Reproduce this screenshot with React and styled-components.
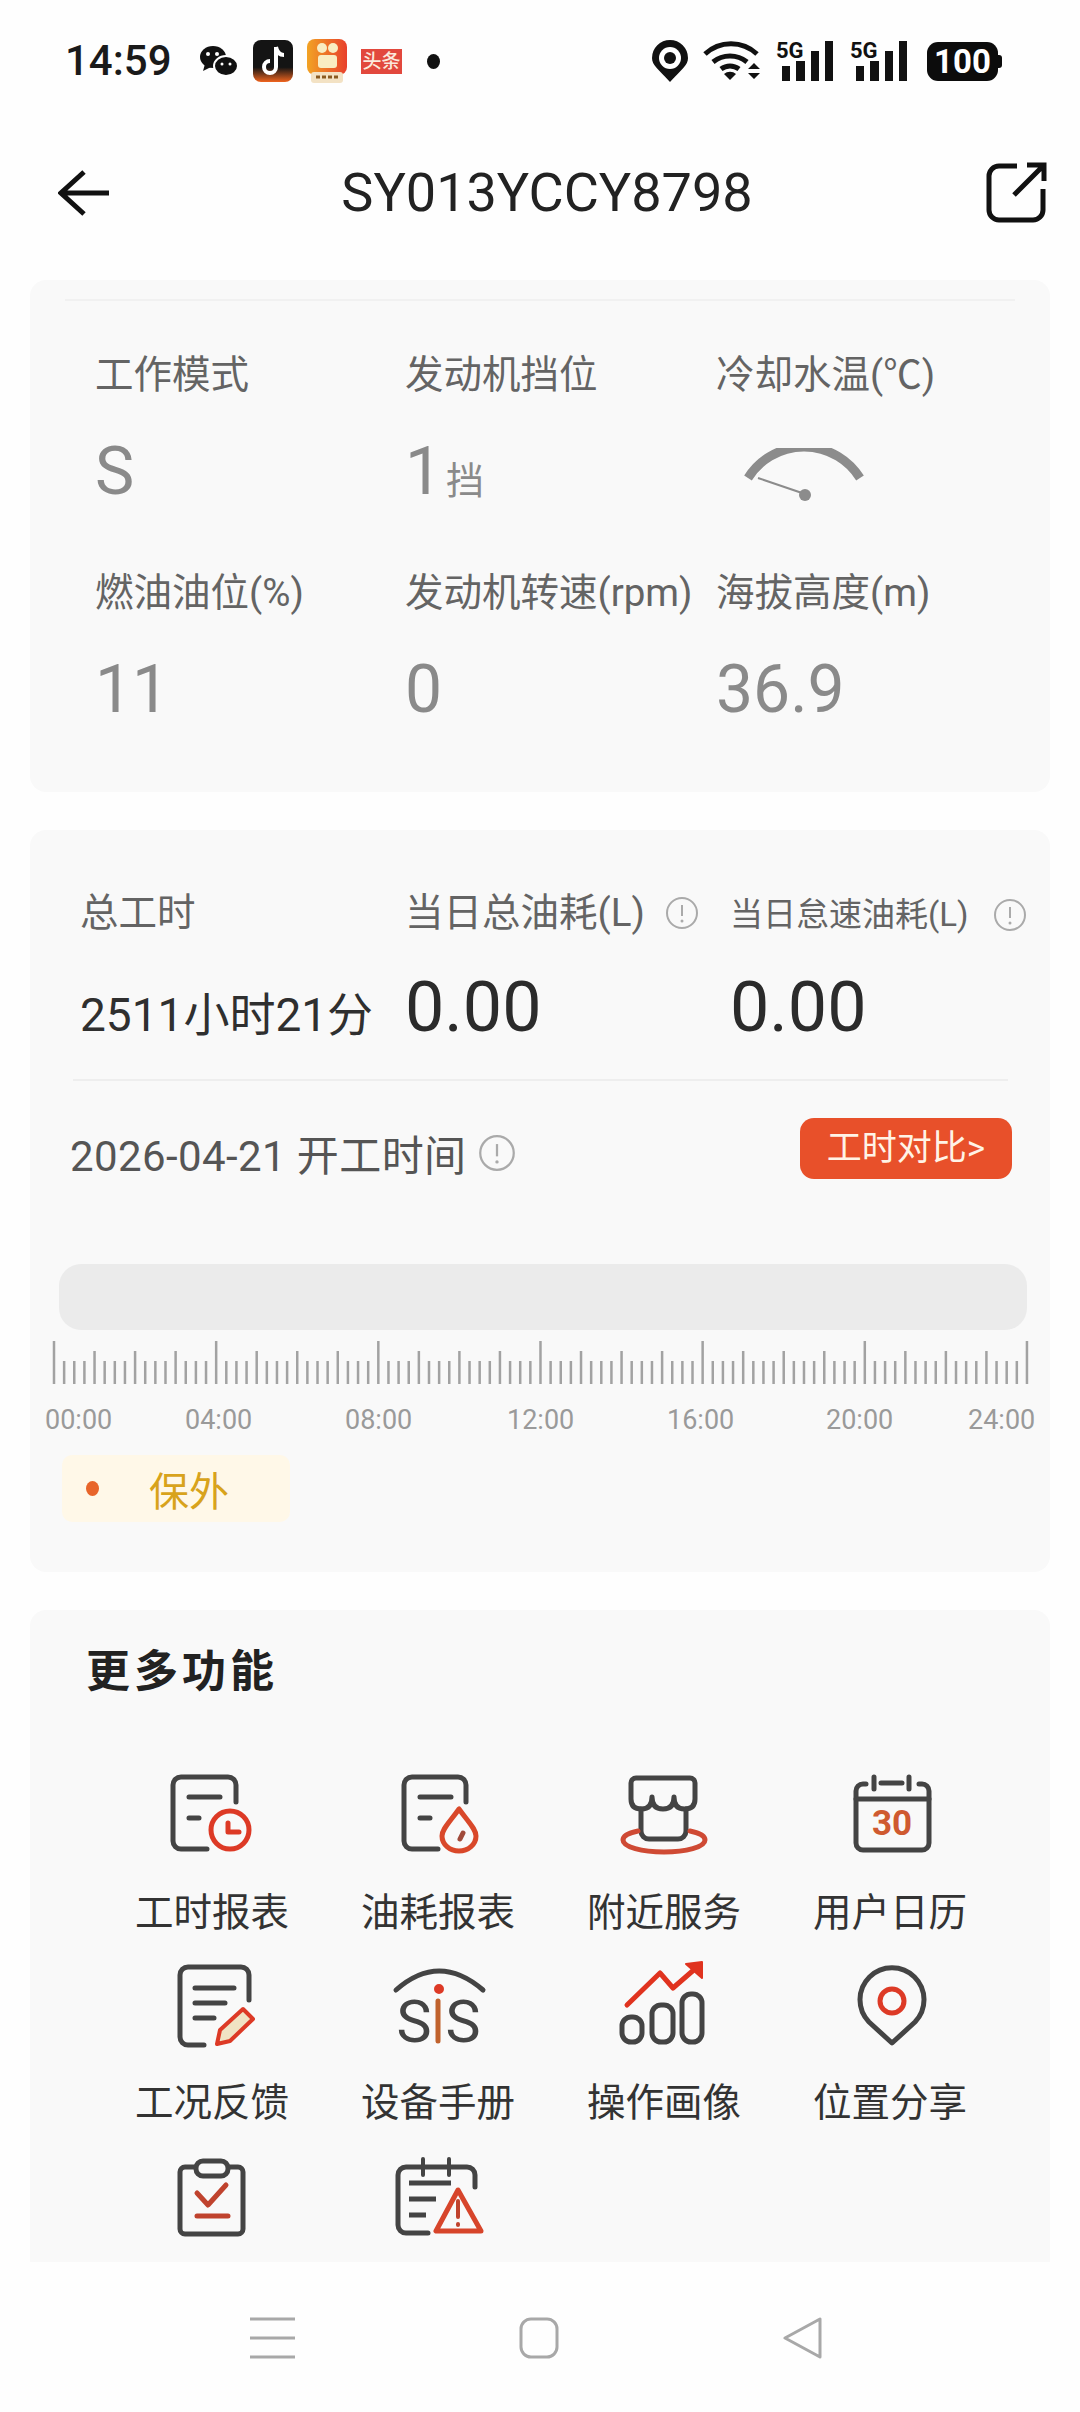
import React from "react";
import styled, { createGlobalStyle } from "styled-components";

const FONT = `Roboto, "Noto Sans CJK SC", sans-serif`;

const GlobalStyle = createGlobalStyle`
    html, body {
        margin: 0;
        padding: 0;
        background: #fefefe;
        font-family: ${FONT};
    }
`;

const Page = styled.div`
    width: 1080px;
    height: 2412px;
    display: flex;
    flex-direction: column;
    overflow: hidden;
    background: #fefefe;
`;

const StatusBar = styled.div`
    height: 120px;
    flex: none;
    display: flex;
    align-items: flex-start;
    justify-content: space-between;
    padding: 38px 77px 0 65px;
    box-sizing: border-box;
`;
const StatusGroup = styled.div`
    display: flex;
    align-items: center;
    height: 46px;
    gap: ${props => props.$gap || 15}px;
`;
const Clock = styled.div`
    width: 107px;
    margin-right: 13px;
    font-size: 42px;
    font-weight: 500;
    line-height: 46px;
    color: #1a1a1a;
`;
const NewsBadge = styled.div`
    width: 41px;
    height: 25px;
    background: #e2483d;
    color: #fbe9dc;
    font-size: 19px;
    line-height: 25px;
    text-align: center;
    font-weight: 500;
`;
const Dot = styled.div`
    width: 13px;
    height: 15px;
    margin-left: 11px;
    border-radius: 50%;
    background: #111;
`;
const Battery = styled.div`
    position: relative;
    width: 71px;
    height: 39px;
    margin-left: 3px;
    margin-right: 5px;
    border-radius: 11px;
    background: #0c0c0c;
    color: #fff;
    font-size: 33px;
    font-weight: 700;
    line-height: 39px;
    text-align: center;
    &::after {
        content: "";
        position: absolute;
        right: -4px;
        top: 13px;
        width: 4px;
        height: 13px;
        border-radius: 0 3px 3px 0;
        background: #0c0c0c;
    }
`;

const Header = styled.div`
    height: 145px;
    flex: none;
    display: flex;
    align-items: center;
    justify-content: space-between;
    padding: 0 33px 0 58px;
    box-sizing: border-box;
    margin-bottom: 15px;
`;
const Title = styled.div`
    font-size: 54px;
    color: #222;
    line-height: 60px;
`;

const Card = styled.div`
    margin: 0 30px;
    background: #f9f9f9;
    border-radius: 16px;
    flex: none;
`;
const StatsCard = styled(Card)`
    height: 512px;
    margin-bottom: 38px;
    overflow: hidden;
`;
const TopRule = styled.div`
    height: 2px;
    margin: 19px 35px 50px;
    background: #f1f1f1;
`;
const StatsGrid = styled.div`
    display: grid;
    grid-template-columns: 310px 311px 1fr;
    row-gap: 47px;
    padding-left: 65px;
`;
const Label = styled.div`
    font-size: ${props => props.$size || 38.5}px;
    line-height: 48px;
    height: 48px;
    color: ${props => props.$color || "#646464"};
    white-space: nowrap;
    display: flex;
    align-items: center;
`;
const StatValue = styled.div`
    height: 100px;
    line-height: 100px;
    margin-top: 23px;
    font-size: 66px;
    color: #8a8a8a;
    display: flex;
    align-items: baseline;
`;
const GaugeBox = styled.div`
    height: 100px;
    margin-top: 23px;
    padding: 6px 0 0 26px;
    box-sizing: border-box;
    display: flex;
    align-items: center;
`;
const Unit = styled.span`
    font-size: 38px;
    margin-left: 4px;
`;

const HoursCard = styled(Card)`
    height: 742px;
    margin-bottom: 38px;
    padding-top: 59px;
    box-sizing: border-box;
`;
const HoursGrid = styled.div`
    display: grid;
    grid-template-columns: 325px 325px 1fr;
    grid-template-rows: 48px 90px;
    row-gap: 25px;
    align-items: baseline;
    padding-left: 50px;
`;
const InfoButton = styled.svg`
    width: ${props => props.$size || 34}px;
    height: ${props => props.$size || 34}px;
    margin-left: ${props => props.$left || 20}px;
    flex: none;
`;
const HoursText = styled.div`
    font-size: 46px;
    color: #2f2f2f;
    white-space: nowrap;
`;
const BigNumber = styled.div`
    font-size: 70px;
    line-height: 90px;
    color: #2b2b2b;
`;
const Rule = styled.div`
    height: 2px;
    width: 935px;
    margin: 27px 0 33px 43px;
    background: #eeeeee;
`;
const DateRow = styled.div`
    display: flex;
    align-items: center;
    justify-content: space-between;
    padding: 0 38px 0 40px;
`;
const DateText = styled.div`
    display: flex;
    align-items: center;
    padding-top: 8px;
    font-size: 42px;
    letter-spacing: 0.4px;
    color: #555;
    white-space: pre;
`;
const CompareButton = styled.button`
    width: 212px;
    height: 61px;
    padding: 0;
    border: none;
    border-radius: 14px;
    background: #e8502a;
    color: #fff3e6;
    font-family: ${FONT};
    font-size: 35px;
    line-height: 61px;
`;
const TimelineBar = styled.div`
    width: 968px;
    height: 66px;
    margin: 81px 0 0 29px;
    border-radius: 22px;
    background: #ebebeb;
`;
const Ruler = styled.svg`
    display: block;
    width: 980px;
    height: 46px;
    margin: 8px 0 0 22px;
`;
const TimeLabels = styled.div`
    display: grid;
    grid-template-columns: 140px 160px 162px 160px 159px 142px auto;
    margin: 19px 0 0 15px;
    font-size: 27px;
    line-height: 34px;
    color: #9a9a9a;
`;
const Chip = styled.div`
    width: 228px;
    height: 67px;
    margin: 18px 0 0 32px;
    padding-left: 24px;
    box-sizing: border-box;
    display: flex;
    align-items: center;
    border-radius: 10px;
    background: #fff8e8;
    color: #d8a31c;
    font-size: 40px;
`;
const ChipDot = styled.span`
    width: 13px;
    height: 15px;
    margin-right: 50px;
    border-radius: 50%;
    background: #e8652a;
`;

const MoreCard = styled(Card)`
    flex: 1;
    min-height: 0;
    overflow: hidden;
    border-radius: 16px 16px 0 0;
    padding: 32px 0 0 69px;
`;
const MoreTitle = styled.div`
    height: 60px;
    line-height: 60px;
    margin: 0 0 63px -13px;
    font-size: 44px;
    letter-spacing: 4px;
    font-weight: 700;
    color: #222;
`;
const FeatureGrid = styled.div`
    display: grid;
    grid-template-columns: repeat(4, 226px);
    row-gap: 18px;
`;
const Feature = styled.div`
    display: flex;
    flex-direction: column;
    align-items: center;
`;
const FeatureIcon = styled.svg`
    display: block;
    width: 100px;
    height: 100px;
    overflow: visible;
    fill: none;
    stroke: #444;
    stroke-width: 5;
    stroke-linecap: round;
    stroke-linejoin: round;
`;
const FeatureName = styled.div`
    margin-top: 24px;
    height: 48px;
    line-height: 48px;
    font-size: 38.5px;
    color: #333;
    white-space: nowrap;
`;

const NavBar = styled.div`
    height: 150px;
    flex: none;
    box-sizing: border-box;
    display: flex;
    align-items: flex-start;
    gap: 224px;
    padding: 55px 0 0 250px;
    background: #fefefe;
`;
const NavIcon = styled.svg`
    display: block;
    height: 42px;
    width: ${props => props.$w}px;
    fill: none;
    stroke: #a8a8a8;
    stroke-width: 3;
`;

const RED = "#dd3a26";

function InfoIcon({ size, left }) {
    return (
        <InfoButton $size={size} $left={left} viewBox="0 0 34 34">
            <circle cx="17" cy="17" r="15" fill="none" stroke="#aaa" strokeWidth="2" />
            <path d="M17 9v11" stroke="#aaa" strokeWidth="2" />
            <circle cx="17" cy="25" r="1.5" fill="#aaa" />
        </InfoButton>
    );
}

function Gauge() {
    return (
        <svg width="124" height="54" viewBox="0 0 124 54">
            <path d="M6 30 A66 66 0 0 1 118 30" fill="none" stroke="#8c8c8c" strokeWidth="9" />
            <path d="M16 30 L63 46" stroke="#8c8c8c" strokeWidth="2" />
            <circle cx="63" cy="47" r="6" fill="#8c8c8c" />
        </svg>
    );
}

function SignalIcon() {
    return (
        <svg width="59" height="50" viewBox="0 -3 59 50">
            <text x="0" y="19" fontFamily="Roboto" fontSize="22" fontWeight="700" fill="#111">5G</text>
            <rect x="6" y="27" width="8" height="15" fill="#111" />
            <rect x="20" y="22" width="9" height="20" fill="#111" />
            <rect x="35" y="12" width="8" height="30" fill="#111" />
            <rect x="49" y="2" width="8" height="40" fill="#111" />
        </svg>
    );
}

const featureIcons = {
    hours: (
        <>
            <path d="M74 37V20a8 8 0 0 0-8-8H19a8 8 0 0 0-8 8v56a8 8 0 0 0 8 8h26" />
            <path d="M27 32h31M27 53h10" />
            <circle cx="68" cy="65" r="19" stroke={RED} />
            <path d="M66 58v9h11" stroke={RED} />
        </>
    ),
    fuel: (
        <>
            <path d="M78 37V20a8 8 0 0 0-8-8H24a8 8 0 0 0-8 8v56a8 8 0 0 0 8 8h26" />
            <path d="M32 32h31M32 53h10" />
            <path d="M71 44C61 58 54 64 54 71a17 15 0 0 0 34 0C88 64 81 58 71 44Z" stroke="#d9482a" />
            <path d="M75 68l-3 6" stroke="#a04a3a" />
        </>
    ),
    service: (
        <>
            <path d="M81 34Q81 44 70.5 44Q60 44 60 32Q60 44 49 44Q38 44 38 32Q38 44 27.5 44Q17 44 17 34V18a5 5 0 0 1 5-5H76a5 5 0 0 1 5 5Z" />
            <path d="M27 44V66a8 8 0 0 0 8 8H64a8 8 0 0 0 8-8V44" />
            <path d="M24 66C14 68 9 71 9 75C9 82 28 87 50 87C72 87 91 82 91 75C91 71 86 68 76 66" stroke="#cf4a34" />
        </>
    ),
    calendar: (
        <>
            <path d="M26 19H23a7 7 0 0 0-7 7V78a7 7 0 0 0 7 7H82a7 7 0 0 0 7-7V26a7 7 0 0 0-7-7H79" />
            <path d="M16 34H89M41 18H62M34 12V24M69 12V24" />
            <text x="52" y="70" textAnchor="middle" fontFamily="Roboto" fontSize="35" fontWeight="700" fill="#cf5a30" stroke="none">30</text>
        </>
    ),
    feedback: (
        <>
            <path d="M87 45V20a8 8 0 0 0-8-8H26a8 8 0 0 0-8 8v62a8 8 0 0 0 8 8h16" />
            <path d="M33 33h39M33 48h30M33 63h19" />
            <path d="M55 89L58 75L81 54L91 64L68 86Z" stroke={RED} fill="#f0e3c4" strokeWidth="4" />
        </>
    ),
    sis: (
        <>
            <path d="M8 35Q51-3 95 35" />
            <text x="26" y="87" textAnchor="middle" fontFamily="Roboto" fontSize="59" fill="#444" stroke="none">S</text>
            <text x="75" y="87" textAnchor="middle" fontFamily="Roboto" fontSize="59" fill="#444" stroke="none">S</text>
            <path d="M50 46V86" stroke="#c0622d" />
            <circle cx="51" cy="34" r="4" fill={RED} stroke={RED} strokeWidth="2" />
        </>
    ),
    profile: (
        <>
            <rect x="8" y="62" width="20" height="25" rx="9" />
            <rect x="38" y="50" width="21" height="37" rx="9" />
            <rect x="68" y="39" width="20" height="48" rx="9" />
            <path d="M13 50L46 18L59 33L82 13" stroke="#e0331f" />
            <path d="M88 7V23L72 9Z" fill="#e0331f" stroke="#e0331f" strokeWidth="2" />
        </>
    ),
    share: (
        <>
            <path d="M52 88L29 67A32 32 0 1 1 75 67Z" />
            <circle cx="52" cy="46" r="12" stroke={RED} />
        </>
    ),
    check: (
        <>
            <rect x="18" y="12" width="63" height="67" rx="5" />
            <rect x="34" y="6" width="32" height="15" rx="7" fill="#f9f9f9" />
            <path d="M35 38L46 50L64 30M35 61H66" stroke="#c0432e" />
        </>
    ),
    alert: (
        <>
            <path d="M87 32V20a8 8 0 0 0-8-8H18a8 8 0 0 0-8 8v50a8 8 0 0 0 8 8h22" />
            <path d="M35 4V20M61 4V20" strokeWidth="4" />
            <path d="M21 28H63M21 44H48M21 60H38" strokeLinecap="butt" />
            <path d="M70 35L48 76H93Z" stroke="#d7452b" />
            <path d="M70 46V62M70 69V70" stroke="#c0432e" strokeWidth="4" />
        </>
    )
};

const features = [
    { name: "工时报表", icon: "hours" },
    { name: "油耗报表", icon: "fuel" },
    { name: "附近服务", icon: "service" },
    { name: "用户日历", icon: "calendar" },
    { name: "工况反馈", icon: "feedback" },
    { name: "设备手册", icon: "sis" },
    { name: "操作画像", icon: "profile" },
    { name: "位置分享", icon: "share" },
    { icon: "check", lastRow: true },
    { icon: "alert", lastRow: true }
];

const hours = ["00:00", "04:00", "08:00", "12:00", "16:00", "20:00", "24:00"];

function tickHeight(i) {
    if (i % 16 === 0) return 43;
    if (i % 4 === 0) return 33;
    return 23;
}

export default function App() {
    return (
        <Page>
            <GlobalStyle />
            <StatusBar>
                <StatusGroup $gap={14}>
                    <Clock>14:59</Clock>
                    <svg width="40" height="32" viewBox="0 0 40 32">
                        <ellipse cx="14" cy="12" rx="13" ry="11" fill="#111" />
                        <path d="M6 19l-2 7 8-4z" fill="#111" />
                        <ellipse cx="27" cy="21" rx="12" ry="10" fill="#111" stroke="#fefefe" strokeWidth="2" />
                        <circle cx="9" cy="9" r="2" fill="#fff" />
                        <circle cx="18" cy="9" r="2" fill="#fff" />
                        <circle cx="23" cy="19" r="1.5" fill="#fff" />
                        <circle cx="31" cy="19" r="1.5" fill="#fff" />
                    </svg>
                    <svg width="40" height="42" viewBox="0 0 40 42">
                        <defs>
                            <linearGradient id="tt" x1="0" y1="0" x2="0" y2="1">
                                <stop offset="0.65" stopColor="#141414" />
                                <stop offset="1" stopColor="#f0641e" />
                            </linearGradient>
                        </defs>
                        <rect width="40" height="42" rx="8" fill="url(#tt)" />
                        <path d="M23 7v20a6 6 0 1 1-6-6M23 7c1 5 4 8 8 8" fill="none" stroke="#fff" strokeWidth="4" />
                    </svg>
                    <svg width="40" height="44" viewBox="0 0 40 44">
                        <defs>
                            <linearGradient id="ks" x1="0" y1="0" x2="1" y2="0">
                                <stop offset="0" stopColor="#f2a324" />
                                <stop offset="1" stopColor="#e8402c" />
                            </linearGradient>
                        </defs>
                        <rect width="40" height="36" rx="8" fill="url(#ks)" />
                        <rect x="4" y="33" width="32" height="11" rx="3" fill="#f3e2c4" />
                        <circle cx="15" cy="9" r="5" fill="#f9edc2" />
                        <circle cx="26" cy="9" r="5" fill="#f9edc2" />
                        <rect x="11" y="16" width="19" height="13" rx="3" fill="#f9edc2" />
                        <path d="M9 38h22" stroke="#8a5a20" strokeWidth="3" strokeDasharray="4 2" />
                    </svg>
                    <NewsBadge>头条</NewsBadge>
                    <Dot />
                </StatusGroup>
                <StatusGroup>
                    <svg width="36" height="42" viewBox="0 0 36 42">
                        <path d="M18 42C6 29 0 25 0 18a18 18 0 0 1 36 0C36 25 30 29 18 42Z" fill="#111" />
                        <circle cx="18" cy="18" r="11" fill="#fff" />
                        <circle cx="18" cy="18" r="6" fill="#111" />
                    </svg>
                    <svg width="58" height="40" viewBox="0 0 58 40" fill="none" stroke="#111" strokeWidth="5">
                        <path d="M2 13a38 38 0 0 1 52 0" />
                        <path d="M10 21a27 27 0 0 1 34 0" />
                        <path d="M18 28a15 15 0 0 1 18 0" />
                        <path d="M21 33a9 9 0 0 1 12 0L27 39Z" fill="#111" stroke="none" />
                        <path d="M45 28l6-6 6 6zM45 32l6 6 6-6z" fill="#111" stroke="none" />
                    </svg>
                    <SignalIcon />
                    <SignalIcon />
                    <Battery>100</Battery>
                </StatusGroup>
            </StatusBar>

            <Header>
                <svg width="51" height="46" viewBox="0 0 51 46" fill="none" stroke="#111" strokeWidth="5">
                    <path d="M51 23H4M26 2L3 23L26 44" />
                </svg>
                <Title>SY013YCCY8798</Title>
                <svg width="62" height="62" viewBox="0 0 62 62" fill="none" stroke="#111" strokeWidth="5">
                    <path d="M32 4H14A10 10 0 0 0 4 14V48A10 10 0 0 0 14 58H48A10 10 0 0 0 58 48V27" />
                    <path d="M29 33L58 4M42 3H59V19" />
                </svg>
            </Header>

            <StatsCard>
                <TopRule />
                <StatsGrid>
                    <div>
                        <Label>工作模式</Label>
                        <StatValue>S</StatValue>
                    </div>
                    <div>
                        <Label>发动机挡位</Label>
                        <StatValue>
                            1<Unit>挡</Unit>
                        </StatValue>
                    </div>
                    <div>
                        <Label>冷却水温(℃)</Label>
                        <GaugeBox>
                            <Gauge />
                        </GaugeBox>
                    </div>
                    <div>
                        <Label>燃油油位(%)</Label>
                        <StatValue>11</StatValue>
                    </div>
                    <div>
                        <Label>发动机转速(rpm)</Label>
                        <StatValue>0</StatValue>
                    </div>
                    <div>
                        <Label>海拔高度(m)</Label>
                        <StatValue>36.9</StatValue>
                    </div>
                </StatsGrid>
            </StatsCard>

            <HoursCard>
                <HoursGrid>
                    <Label>总工时</Label>
                    <Label>
                        当日总油耗(L)
                        <InfoIcon />
                    </Label>
                    <Label $size={33}>
                        当日怠速油耗(L)
                        <InfoIcon left={24} />
                    </Label>
                    <HoursText>2511小时21分</HoursText>
                    <BigNumber>0.00</BigNumber>
                    <BigNumber>0.00</BigNumber>
                </HoursGrid>
                <Rule />
                <DateRow>
                    <DateText>
                        2026-04-21 开工时间
                        <InfoIcon size={38} left={12} />
                    </DateText>
                    <CompareButton>工时对比&gt;</CompareButton>
                </DateRow>
                <TimelineBar />
                <Ruler viewBox="0 0 980 46">
                    {Array.from({ length: 97 }, (_, i) => (
                        <line
                            key={i}
                            x1={2 + i * 10.135}
                            x2={2 + i * 10.135}
                            y1={46 - tickHeight(i)}
                            y2={46}
                            stroke="#a2a2a2"
                            strokeWidth="2.5"
                        />
                    ))}
                </Ruler>
                <TimeLabels>
                    {hours.map(hour => (
                        <span key={hour}>{hour}</span>
                    ))}
                </TimeLabels>
                <Chip>
                    <ChipDot />
                    保外
                </Chip>
            </HoursCard>

            <MoreCard>
                <MoreTitle>更多功能</MoreTitle>
                <FeatureGrid>
                    {features.map(item => (
                        <Feature key={item.icon}>
                            <FeatureIcon viewBox={item.lastRow ? "0 -10 100 100" : "0 0 100 100"}>
                                {featureIcons[item.icon]}
                            </FeatureIcon>
                            {item.name && <FeatureName>{item.name}</FeatureName>}
                        </Feature>
                    ))}
                </FeatureGrid>
            </MoreCard>

            <NavBar>
                <NavIcon $w={45} viewBox="0 0 45 42">
                    <path d="M0 2H45M0 21H45M0 40H45" />
                </NavIcon>
                <NavIcon $w={40} viewBox="0 0 40 42">
                    <rect x="2" y="2" width="36" height="38" rx="10" />
                </NavIcon>
                <NavIcon $w={40} viewBox="0 0 40 42">
                    <path d="M37 2V40L2 21Z" strokeLinejoin="round" />
                </NavIcon>
            </NavBar>
        </Page>
    );
}
